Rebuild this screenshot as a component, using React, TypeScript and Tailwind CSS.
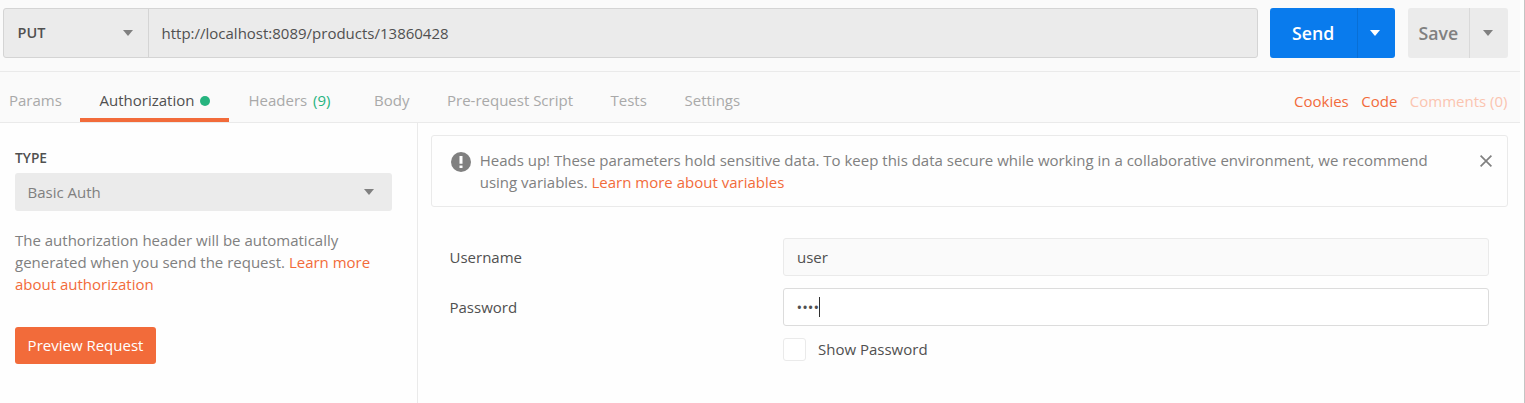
import React from "react";

function Caret({ className }: { className: string }) {
  return (
    <svg width="10" height="6" viewBox="0 0 10 6" className={className} fill="currentColor">
      <path d="M0 0h10L5 6z" />
    </svg>
  );
}

function Tab({ className, children }: { className: string; children: React.ReactNode }) {
  return <div className={`shrink-0 whitespace-nowrap pt-[17px] ${className}`}>{children}</div>;
}

function RequestBar() {
  return (
    <div className="flex h-[72px] border-b border-[#eaeaea] pt-2 pl-[3px]">
      <div className="flex h-[50px] w-[1255px] rounded-[3px] border border-[#d4d4d4] bg-[#ebebeb] text-[#505050]">
        <div className="flex w-[145px] items-center justify-between border-r border-[#d4d4d4] pr-[15px] pl-[13.5px] font-semibold">
          <span className="text-[14.5px]">PUT</span>
          <Caret className="text-[#808080]" />
        </div>
        <div className="flex items-center pl-[12.5px]">http://localhost:8089/products/13860428</div>
      </div>
      <div className="ml-3 flex h-[50px] w-[125px] rounded-[3px] bg-[#097bed] text-white">
        <div className="flex w-[88px] items-center border-r border-[#086fd6] pl-[22px] text-[17.7px] font-semibold">Send</div>
        <div className="flex flex-1 items-center pl-3">
          <Caret className="text-white" />
        </div>
      </div>
      <div className="ml-[13px] flex h-[50px] w-[100px] rounded-[3px] bg-[#ebebeb] text-[#808080]">
        <div className="flex w-[62px] items-center border-r border-[#d9d9d9] pl-[10.5px] text-[17.7px] font-semibold">Save</div>
        <div className="flex flex-1 items-center pl-[13px]">
          <Caret className="text-[#808080]" />
        </div>
      </div>
    </div>
  );
}

function TabBar() {
  return (
    <div className="flex h-[51px] border-b border-[#eaeaea] text-[#a9a9a9]">
      <Tab className="w-20 pl-[9px]">Params</Tab>
      <Tab className="flex w-[149px] border-b-4 border-[#f26b3a] pl-[19.5px] text-[#505050]">
        Authorization
        <span className="mt-[7px] ml-[5.5px] size-[10px] rounded-full bg-[#26b47f]" />
      </Tab>
      <Tab className="w-[145px] pl-[19.5px]">
        Headers <span className="ml-[2px] text-[#26b47f]">(9)</span>
      </Tab>
      <Tab className="w-[73px]">Body</Tab>
      <Tab className="w-[163.5px]">Pre-request Script</Tab>
      <Tab className="w-[74px]">Tests</Tab>
      <Tab className="">Settings</Tab>
      <div className="ml-auto flex gap-[12.5px] pt-[18px] pr-[12.5px] text-[#f26b3a]">
        <span>Cookies</span>
        <span>Code</span>
        <span className="text-[#fac4b0]">Comments (0)</span>
      </div>
    </div>
  );
}

function AuthSidebar() {
  return (
    <div className="w-[418px] shrink-0 border-r border-[#eaeaea] pt-[25px] pl-[15px] text-[#808080]">
      <div className="h-[25px] text-[13.75px] leading-5 font-semibold text-[#505050]">TYPE</div>
      <div className="flex h-[38px] w-[377px] items-center justify-between rounded-[3px] bg-[#ebebeb] pr-[18px] pl-[12.5px]">
        <span>Basic Auth</span>
        <Caret className="text-[#808080]" />
      </div>
      <p className="mt-[18px] w-[377px] leading-[22px]">
        The authorization header will be automatically
        <br />
        generated when you send the request. <span className="text-[#f26b3a]">Learn more</span>
        <br />
        <span className="text-[#f26b3a]">about authorization</span>
      </p>
      <button className="mt-8 flex h-[37px] w-[141px] items-center justify-center rounded-[3px] bg-[#f26b3a] pb-[2px] font-medium whitespace-nowrap text-white">
        Preview Request
      </button>
    </div>
  );
}

function Notice() {
  return (
    <div className="ml-[13px] flex h-[72px] w-[1077px] rounded-[3px] border border-[#eaeaea] pt-[13px] pl-[19px] text-[#808080]">
      <svg width="20" height="20" viewBox="0 0 20 20" className="mt-[3px] shrink-0">
        <circle cx="10" cy="10" r="10" fill="#808080" />
        <path d="M8.5 4h3v7.8h-3zM8.5 13.4h3v2.6h-3z" fill="#fff" />
      </svg>
      <p className="ml-[8.7px] leading-[22px] whitespace-nowrap">
        Heads up! These parameters hold sensitive data. To keep this data secure while working in a collaborative environment, we recommend
        <br />
        using variables. <span className="text-[#f26b3a]">Learn more about variables</span>
      </p>
      <svg width="12" height="12" viewBox="0 0 12 12" className="mt-[6px] mr-[15px] ml-auto shrink-0" fill="none" stroke="#808080" strokeWidth="1.7">
        <path d="M.6.6l10.8 10.8M11.4.6L.6 11.4" />
      </svg>
    </div>
  );
}

function Credentials() {
  return (
    <div className="mt-[31px] pl-[31.5px] text-[#505050]">
      <div className="flex h-[38px] items-center">
        <div className="w-[333.5px]">Username</div>
        <div className="flex h-[38px] w-[706px] items-center rounded-[3px] border border-[#eaeaea] bg-[#fafafa] pl-[13px]">user</div>
      </div>
      <div className="mt-3 flex h-[38px] items-center">
        <div className="w-[333.5px]">Password</div>
        <div className="flex h-[38px] w-[706px] items-center rounded-[3px] border border-[#dcdcdc] bg-white pl-[12.5px]">
          <span>••••</span>
          <span className="-ml-[0.5px] h-5 w-px bg-[#303030]" />
        </div>
      </div>
      <div className="mt-3 flex h-[23px] pl-[333.5px]">
        <span className="size-[23px] rounded-[3px] border border-[#eaeaea] bg-white" />
        <span className="ml-3">Show Password</span>
      </div>
    </div>
  );
}

export default function App() {
  return (
    <div className="flex h-[403px] w-[1525px] flex-col overflow-hidden border-r border-[#c4c4c4] bg-[#fefefe] font-['Open_Sans',sans-serif] text-[15px] leading-[22px]">
      <div className="w-[1520px] bg-[#fafafa]">
        <RequestBar />
        <TabBar />
      </div>
      <div className="flex flex-1">
        <AuthSidebar />
        <div className="pt-3">
          <Notice />
          <Credentials />
        </div>
      </div>
    </div>
  );
}
